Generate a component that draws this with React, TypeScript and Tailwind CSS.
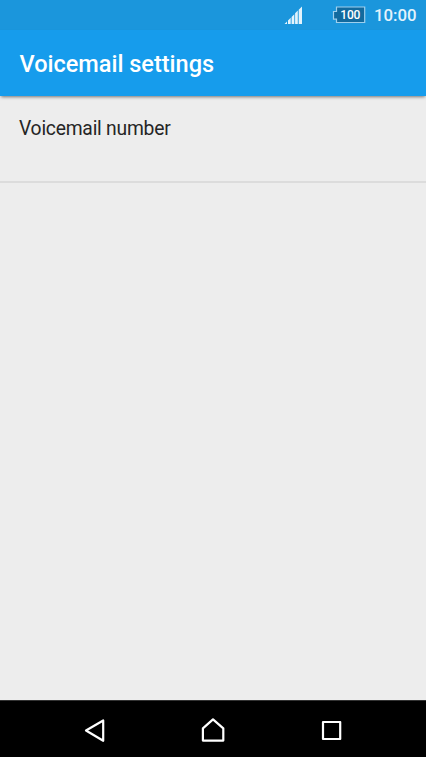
const SignalIcon = () => (
  <svg width="18" height="18" viewBox="0 0 18 18" fill="#e3f3fc">
    <path d="M0.5 18 3 15.5V18ZM4 14.5 6.7 11.8V18H4ZM7.6 10.9 10.3 8.2V18H7.6ZM11.1 7.3 13.8 4.6V18H11.1ZM14.7 3.7 18 0.4V18H14.7Z" />
  </svg>
);

const BatteryIcon = () => (
  <svg width="34" height="18" viewBox="0 0 34 18">
    <path
      d="M4.5 1H32.7V16.5H4.5V13.2H1.5V5.5H4.5Z"
      fill="#126a9e"
      stroke="#9fd0ed"
      strokeWidth="1.2"
    />
    <text
      x="18.3"
      y="13"
      textAnchor="middle"
      textLength="20"
      className="fill-white font-['Roboto',sans-serif] text-[12px] font-medium"
    >
      100
    </text>
  </svg>
);

const StatusBar = () => (
  <div className="flex h-[30px] items-center justify-end bg-[#1b96dc] pr-[10px]">
    <SignalIcon />
    <div className="ml-[30px]">
      <BatteryIcon />
    </div>
    <span className="ml-2 w-[42px] whitespace-nowrap text-right text-[16.8px] font-medium leading-[31px] text-[#e3f3fc]">
      10:00
    </span>
  </div>
);

const NavigationBar = () => (
  <nav className="h-[57px] border-t border-[#333333] bg-black">
    <svg
      width="426"
      height="56"
      viewBox="0 0 426 56"
      fill="none"
      stroke="#ffffff"
      strokeWidth="2.2"
      strokeLinejoin="round"
    >
      <path d="M86 29.5 103.2 19.5V39.8Z" />
      <path d="M202.9 39.6V27.3L213 18.4 223.3 27.3V39.6Z" />
      <path d="M323 21H340.2V38H323Z" />
    </svg>
  </nav>
);

const App = () => {
  return (
    <div className="flex h-[757px] w-[426px] flex-col overflow-hidden bg-[#ededed] font-['Roboto',sans-serif]">
      <StatusBar />

      <header className="flex h-[66px] items-center bg-[#169cec] pl-[19.5px] shadow-[0_2px_3px_-1px_rgba(0,0,0,0.5)]">
        <h1 className="pt-[3px] text-[23.5px] font-medium text-white">
          Voicemail settings
        </h1>
      </header>

      <main className="flex-1">
        <div className="h-[87px] border-b-2 border-[#dcdcdc] pl-[19px] pt-[19px]">
          <p className="text-[19.3px] leading-7 tracking-[-0.23px] text-[#252525]">
            Voicemail number
          </p>
        </div>
      </main>

      <NavigationBar />
    </div>
  );
};

export default App;
